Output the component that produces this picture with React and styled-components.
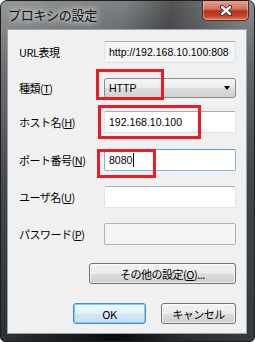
import styled, { createGlobalStyle } from 'styled-components';

const GlobalStyle = createGlobalStyle`
    html, body {
        margin: 0;
        padding: 0;
        background: #ffffff;
    }
    body {
        font-family: 'Noto Sans CJK JP', 'Liberation Sans', sans-serif;
    }
`;

const rows = [
    { label: 'URL表現', key: null, kind: 'readonly', value: 'http://192.168.10.100:808', mt: 11 },
    { label: '種類', key: 'T', kind: 'combo', value: 'HTTP', mt: 14 },
    { label: 'ホスト名', key: 'H', kind: 'text', value: '192.168.10.100', mt: 12 },
    { label: 'ポート番号', key: 'N', kind: 'focus', value: '8080', mt: 16 },
    { label: 'ユーザ名', key: 'U', kind: 'text', value: '', mt: 15 },
    { label: 'パスワード', key: 'P', kind: 'disabled', value: '', mt: 15 },
];

// red annotation boxes drawn over the dialog
const marks = [
    { left: 95, top: 68, width: 68, height: 31 },
    { left: 97, top: 104, width: 103, height: 34 },
    { left: 96, top: 148, width: 59, height: 29 },
];

const CloseIcon = () => (
    <svg width="14" height="11" viewBox="0 0 14 11">
        <path d="M3 2 L11 9 M11 2 L3 9" stroke="#3a2a2a" strokeWidth="4.2" strokeLinecap="round" />
        <path d="M3 2 L11 9 M11 2 L3 9" stroke="#ffffff" strokeWidth="2.4" strokeLinecap="round" />
    </svg>
);

const App = () => {
    return (
        <>
            <GlobalStyle />
            <Window>
                <TitleBar>
                    <Title>プロキシの設定</Title>
                    <CloseButton><CloseIcon /></CloseButton>
                </TitleBar>
                <Body>
                    <Client>
                        {rows.map((r) => (
                            <Row key={r.label} $mt={r.mt}>
                                <Label>
                                    {r.label}
                                    {r.key && <>(<u>{r.key}</u>)</>}
                                </Label>
                                {r.kind === 'combo' ? (
                                    <Combo>
                                        <span>{r.value}</span>
                                        <Arrow />
                                    </Combo>
                                ) : (
                                    <Field $kind={r.kind}>
                                        {r.value}
                                        {r.kind === 'focus' && <Caret />}
                                    </Field>
                                )}
                            </Row>
                        ))}
                        <MoreRow>
                            <Button $w={147}>その他の設定(<u>O</u>)...</Button>
                        </MoreRow>
                        <ButtonRow>
                            <Button $w={73} $default>OK</Button>
                            <Button $w={75}>キャンセル</Button>
                        </ButtonRow>
                    </Client>
                </Body>
                {marks.map((m, i) => (
                    <Mark key={i} style={{ left: m.left, top: m.top, width: m.width, height: m.height }} />
                ))}
            </Window>
        </>
    );
};

export default App;

/* window frame */
const Window = styled.div`
    position: relative;
    box-sizing: border-box;
    width: 255px;
    height: 342px;
    display: flex;
    flex-direction: column;
    border: 1px solid #1b1f22;
    border-radius: 7px 7px 5px 5px;
    overflow: hidden;
    background:
        linear-gradient(100deg, rgba(255,255,255,0.22) 0%, rgba(255,255,255,0.05) 40%, rgba(0,0,0,0.3) 55%, rgba(255,255,255,0.12) 78%, rgba(255,255,255,0.18) 100%),
        linear-gradient(#777a7c 0%, #4a4d50 20%, #1e2327 55%, #0b1013 100%);
`;

const TitleBar = styled.div`
    height: 28px;
    display: flex;
    justify-content: space-between;
    align-items: flex-start;
    padding: 0 5px 0 7px;
`;

const Title = styled.div`
    margin-top: 6px;
    font-size: 13px;
    line-height: 16px;
    letter-spacing: -0.3px;
    color: #101010;
    text-shadow: 0 0 6px rgba(255,255,255,0.9), 0 0 10px rgba(255,255,255,0.7);
`;

const CloseButton = styled.div`
    box-sizing: border-box;
    width: 47px;
    height: 21px;
    margin-top: -1px;
    display: flex;
    align-items: center;
    justify-content: center;
    border: 1px solid #4a2a26;
    border-top: none;
    border-radius: 0 0 5px 5px;
    background: linear-gradient(#e7a797 0%, #d4715c 45%, #b8301a 55%, #c4452a 80%, #e07a50 100%);
    box-shadow: inset 0 0 0 1px rgba(255,255,255,0.35);
`;

const Body = styled.div`
    flex: 1;
    display: flex;
    padding: 0 7px 7px 6px;
`;

/* dialog contents */
const Client = styled.div`
    flex: 1;
    display: flex;
    flex-direction: column;
    background: #f0f0f0;
    border: 1px solid #9aa3ab;
    padding: 0 10px 0 11px;
    font-size: 11px;
    letter-spacing: -0.5px;
    color: #000000;
`;

const Row = styled.div`
    display: grid;
    grid-template-columns: 85px 132px;
    align-items: center;
    height: 22px;
    margin-top: ${(p) => p.$mt}px;
`;

const Label = styled.div`
    white-space: nowrap;
    line-height: 14px;
`;

const Field = styled.div`
    box-sizing: border-box;
    height: 22px;
    display: flex;
    align-items: center;
    padding-left: 4px;
    overflow: hidden;
    white-space: nowrap;
    font-family: 'Liberation Sans', sans-serif;
    font-size: 10.5px;
    letter-spacing: 0;
    background: ${(p) => (p.$kind === 'disabled' || p.$kind === 'readonly' ? '#f4f4f4' : '#ffffff')};
    border: 1px solid ${(p) => (p.$kind === 'focus' ? '#7eb4ea' : p.$kind === 'disabled' ? '#afb3b6' : '#dde3e9')};
    border-top-color: ${(p) => (p.$kind === 'focus' ? '#569de5' : p.$kind === 'disabled' ? '#afb3b6' : '#abadb3')};
    border-radius: 2px;
`;

const Caret = styled.span`
    width: 1px;
    height: 14px;
    margin-left: 1px;
    background: #000000;
`;

const Combo = styled.div`
    box-sizing: border-box;
    height: 20px;
    display: flex;
    align-items: center;
    justify-content: space-between;
    padding: 0 5px 0 4px;
    font-family: 'Liberation Sans', sans-serif;
    font-size: 10.5px;
    letter-spacing: 0;
    border: 1px solid #8a8a8a;
    border-radius: 3px;
    background: linear-gradient(#f6f6f6 0%, #eaeaea 50%, #dcdcdc 51%, #d2d2d2 100%);
`;

const Arrow = styled.span`
    width: 0;
    height: 0;
    border-left: 3.5px solid transparent;
    border-right: 3.5px solid transparent;
    border-top: 4px solid #000000;
`;

const MoreRow = styled.div`
    display: flex;
    justify-content: flex-end;
    margin-top: 18px;
`;

const ButtonRow = styled.div`
    display: flex;
    justify-content: flex-end;
    gap: 15px;
    margin-top: 19px;
`;

const Button = styled.div`
    box-sizing: border-box;
    width: ${(p) => p.$w}px;
    height: 21px;
    display: flex;
    align-items: center;
    justify-content: center;
    white-space: nowrap;
    border: 1px solid ${(p) => (p.$default ? '#3c8fd0' : '#707070')};
    border-radius: 3px;
    background: ${(p) =>
        p.$default
            ? 'linear-gradient(#eef7fd 0%, #e3f1fb 50%, #cfe7f7 51%, #c4e0f5 100%)'
            : 'linear-gradient(#f3f3f3 0%, #ebebeb 50%, #dddddd 51%, #cfcfcf 100%)'};
    box-shadow: ${(p) => (p.$default ? 'inset 0 0 0 1px #7fd0f5' : 'inset 0 0 0 1px rgba(255,255,255,0.7)')};
`;

const Mark = styled.div`
    position: absolute;
    box-sizing: border-box;
    border: 3px solid #ec1c24;
    pointer-events: none;
`;
